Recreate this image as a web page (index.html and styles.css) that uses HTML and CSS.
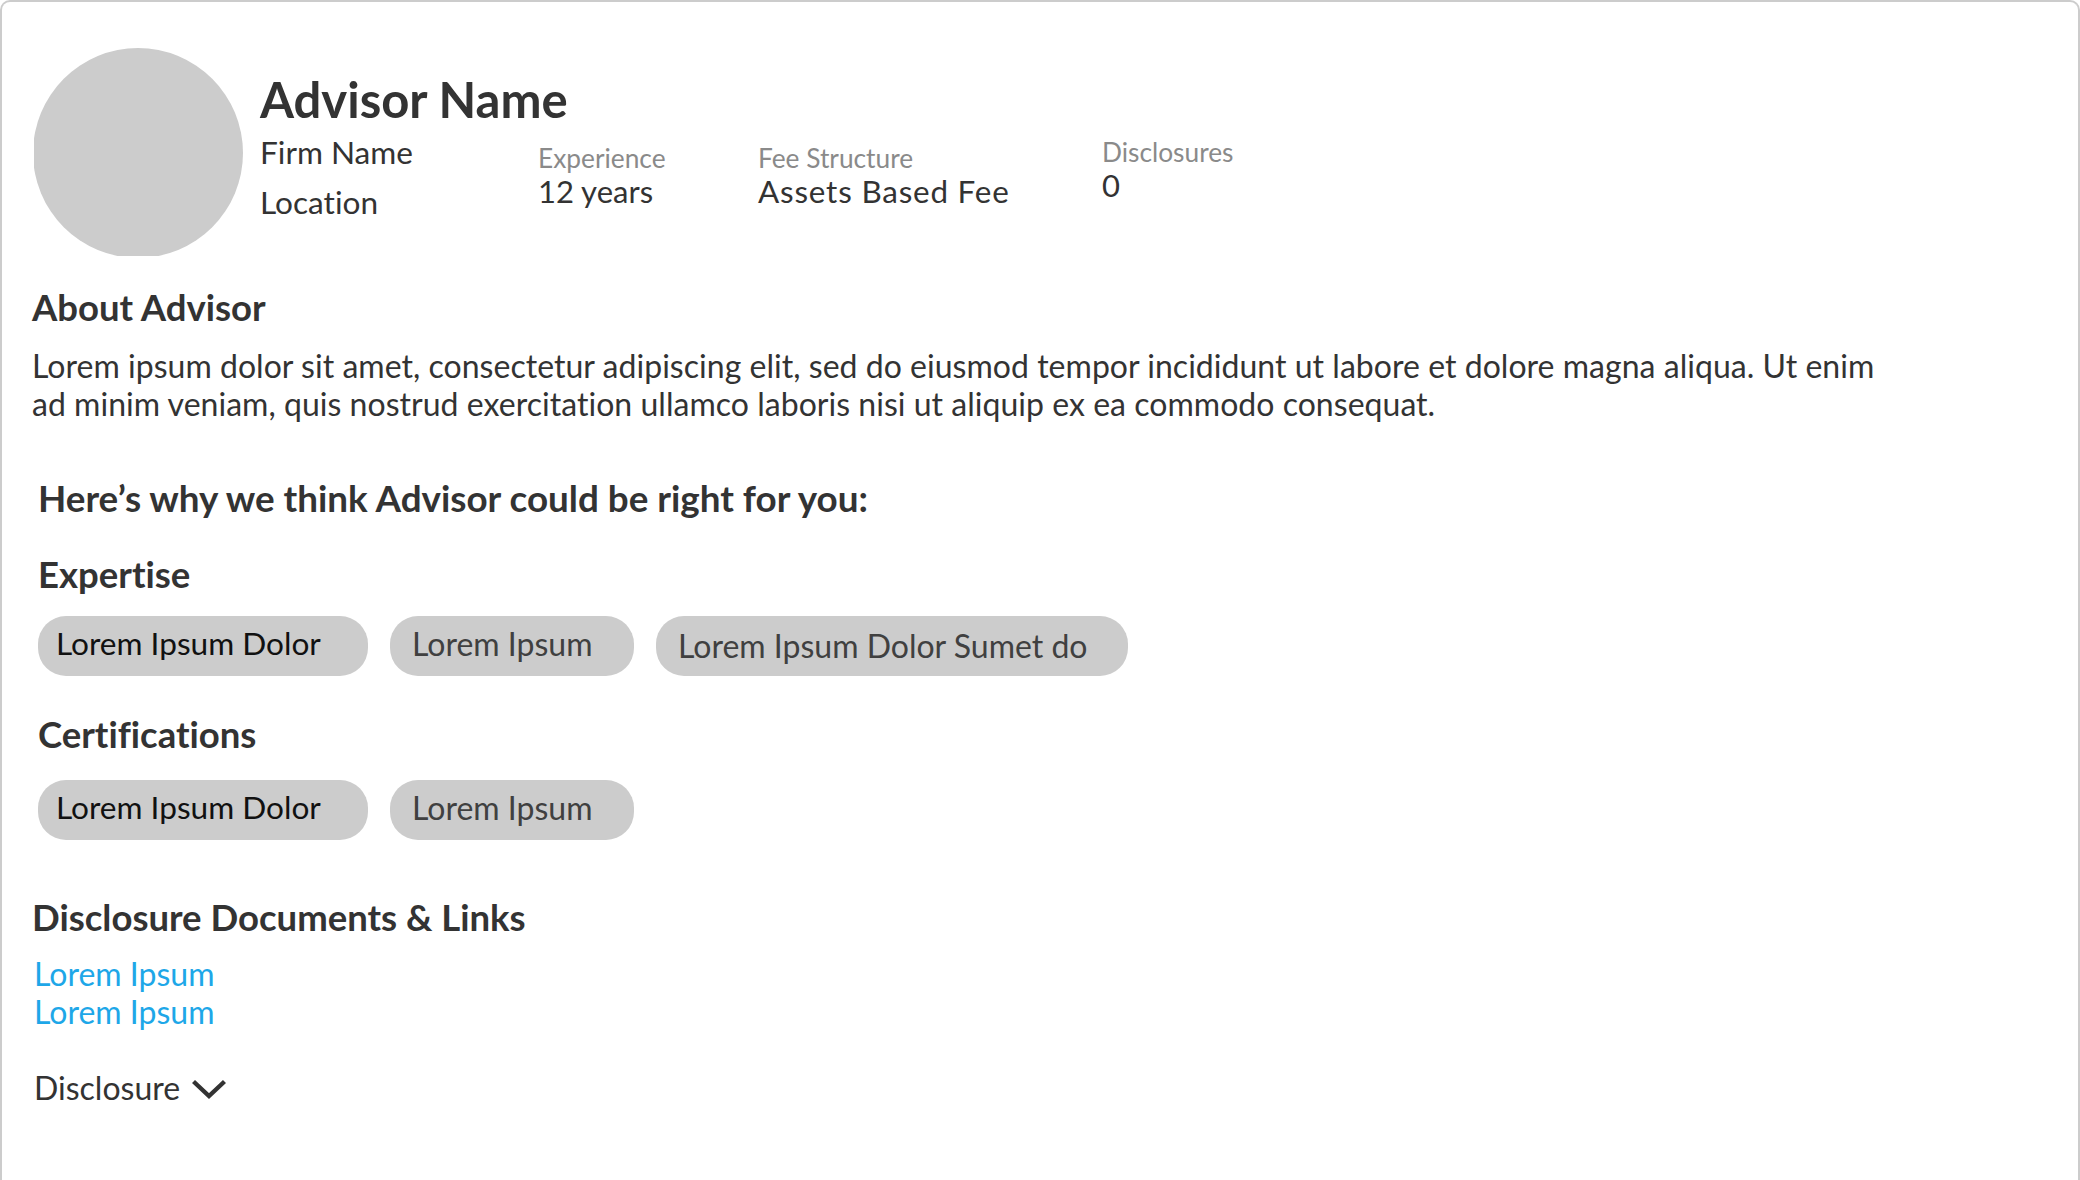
FILE: index.html
```html
<!DOCTYPE html>
<html lang="en">
<head>
<meta charset="utf-8">
<title>Advisor Profile</title>
<link rel="stylesheet" href="styles.css">
</head>
<body>
<main class="card">
  <header class="profile">
    <div class="avatar"></div>
    <div class="identity">
      <h1 class="name">Advisor Name</h1>
      <p class="identity-line">Firm Name</p>
      <p class="identity-line">Location</p>
    </div>
    <dl class="facts">
      <div class="fact fact-experience"><dt>Experience</dt><dd>12 years</dd></div>
      <div class="fact fact-fee"><dt>Fee Structure</dt><dd>Assets Based Fee</dd></div>
      <div class="fact fact-disclosures"><dt>Disclosures</dt><dd>0</dd></div>
    </dl>
  </header>

  <section class="about">
    <h2 class="heading">About Advisor</h2>
    <p class="about-text">Lorem ipsum dolor sit amet, consectetur adipiscing elit, sed do eiusmod tempor incididunt ut labore et dolore magna aliqua. Ut enim<br>ad minim veniam, quis nostrud exercitation ullamco laboris nisi ut aliquip ex ea commodo consequat.</p>
  </section>

  <section class="why">
    <h2 class="heading why-title">Here’s why we think Advisor could be right for you:</h2>
    <h3 class="heading expertise-title">Expertise</h3>
    <div class="chips">
      <span class="chip chip-primary">Lorem Ipsum Dolor</span>
      <span class="chip chip-short">Lorem Ipsum</span>
      <span class="chip chip-long">Lorem Ipsum Dolor Sumet do</span>
    </div>
    <h3 class="heading cert-title">Certifications</h3>
    <div class="chips chips-cert">
      <span class="chip chip-primary">Lorem Ipsum Dolor</span>
      <span class="chip chip-short">Lorem Ipsum</span>
    </div>
  </section>

  <section class="docs">
    <h2 class="heading">Disclosure Documents &amp; Links</h2>
    <ul class="links">
      <li><a href="#">Lorem Ipsum</a></li>
      <li><a href="#">Lorem Ipsum</a></li>
    </ul>
    <button class="toggle" type="button">Disclosure
      <svg class="chevron" width="34" height="20" viewBox="0 0 34 20" aria-hidden="true"><path d="M1.5 2.5 L17 17 L32.5 2.5" fill="none" stroke="#333" stroke-width="4.4"/></svg>
    </button>
  </section>
</main>
</body>
</html>
```
FILE: styles.css
```css
* { box-sizing: border-box; }
html, body { margin: 0; padding: 0; background: #fff; }
body {
  height: 1180px;
  overflow: hidden;
  font-family: "Lato", "Liberation Sans", sans-serif;
  font-variant-ligatures: none;
  color: #333;
}
.card {
  height: 1180px;
  overflow: hidden;
  border: 2px solid #ccc;
  border-bottom: 0;
  border-radius: 10px 10px 0 0;
  padding: 46px 30px 0 30px;
}
.profile { display: flex; align-items: flex-start; }
.avatar {
  flex: none;
  width: 210px;
  height: 210px;
  margin-left: 1px;
  border-radius: 50%;
  background: #ccc;
  clip-path: inset(0 0 2px 1px);
}
.identity { width: 278px; margin-left: 17px; padding-top: 22px; white-space: nowrap; }
.name { margin: 0 0 -1px; font-size: 49px; line-height: 58px; font-weight: 700; }
.identity-line { margin: 0; font-size: 31.6px; line-height: 50px; }
.facts { display: flex; margin: 95px 0 0; }
.fact { flex: none; white-space: nowrap; }
.fact dt { font-size: 26.3px; line-height: 31px; color: #8a8a8a; }
.fact dd { margin: 0; font-size: 31px; line-height: 34px; }
.fact-experience { width: 220px; }
.fact-fee { width: 344px; }
.fact-fee dd { font-size: 31.4px; letter-spacing: .8px; }
.fact-disclosures { margin-top: -6px; }
.heading { margin: 0; font-size: 36.5px; font-weight: 700; line-height: 42px; }
.why-title { font-size: 36.8px; }
.about { margin-top: 28px; }
.about-text { margin: 19px 0 0; font-size: 32px; line-height: 38px; letter-spacing: .03px; white-space: nowrap; }
.why { margin-top: 54px; padding-left: 6px; }
.expertise-title { margin-top: 34px; }
.cert-title { margin-top: 37px; }
.chips { display: flex; gap: 22px; margin-top: 21px; }
.chips-cert { margin-top: 25px; }
.chip {
  display: flex;
  align-items: center;
  height: 60px;
  border-radius: 28px;
  background: #ccc;
  font-size: 32px;
  white-space: nowrap;
}
.chip-primary { width: 330px; padding: 0 0 6px 18px; font-size: 31.6px; color: #111; }
.chip-short { width: 244px; padding: 0 0 6px 22px; color: #404040; }
.chip-long { width: 472px; padding: 0 0 2px 22px; color: #404040; }
.docs { margin-top: 56px; }
.links { list-style: none; margin: 17px 0 0; padding: 0 0 0 2px; }
.links li { font-size: 32px; line-height: 38px; }
.links a { color: #1ea7e8; text-decoration: none; }
.toggle {
  display: flex;
  align-items: center;
  gap: 12px;
  margin: 38px 0 0;
  padding: 0 0 0 2px;
  border: 0;
  background: none;
  font: inherit;
  font-size: 32px;
  line-height: 38px;
  color: #333;
}
.chevron { margin-top: 2px; }
```
